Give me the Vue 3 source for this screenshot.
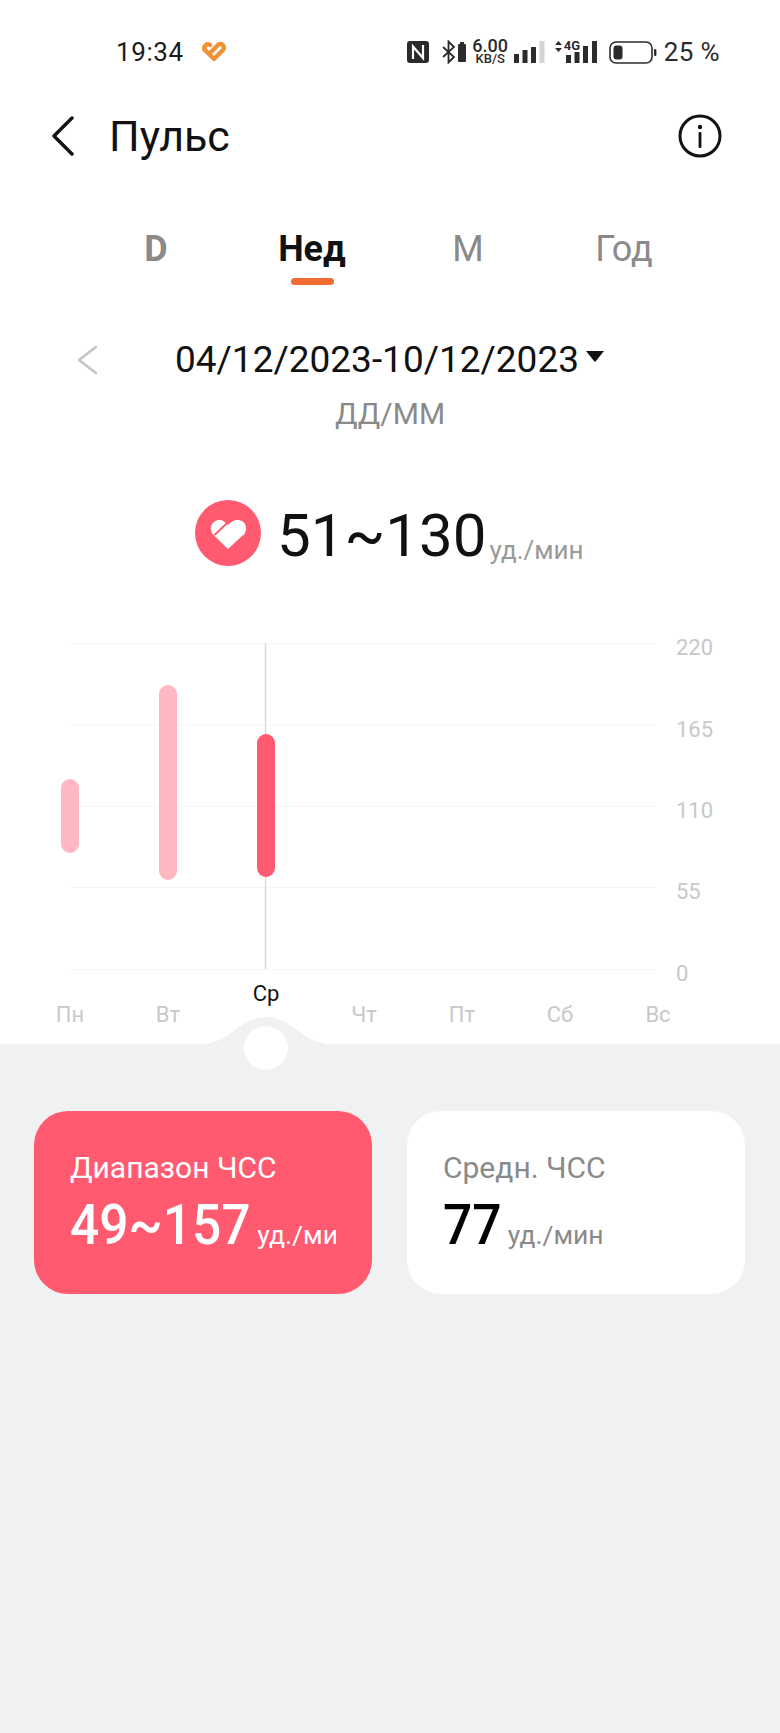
<script setup>
const tabs = [
  { label: "D", cls: "tab-bold" },
  { label: "Нед", cls: "tab-active" },
  { label: "М", cls: "" },
  { label: "Год", cls: "" },
];

// chart canvas: y = 0 is the top gridline
const gridLines = [0, 81.5, 163, 244, 326];
const yLabels = ["220", "165", "110", "55", "0"];

const bars = [
  { x: 61, y: 136, h: 74, color: "#ffb8c2" },
  { x: 159, y: 42, h: 195, color: "#ffb8c2" },
  { x: 257, y: 91, h: 143, color: "#ff5a70" },
];

const days = [
  { label: "Пн", x: 70 },
  { label: "Вт", x: 168 },
  { label: "Чт", x: 364 },
  { label: "Пт", x: 462 },
  { label: "Сб", x: 560 },
  { label: "Вс", x: 658 },
];
</script>

<template>
  <div class="page">
    <div class="top">
      <div class="status">
        <span class="time">19:34</span>
        <svg class="app-heart" width="26" height="22" viewBox="0 0 26 22">
          <path d="M3.5 8.5 L13 18 L22 9 C24.5 6 21 1.5 17.5 3.5 L10.5 10.5" fill="none" stroke="#f39233" stroke-width="4.4" stroke-linecap="round" stroke-linejoin="round" />
          <path d="M3.5 8.5 C2.5 5 6 2 9 4" fill="none" stroke="#f39233" stroke-width="4.4" stroke-linecap="round" />
        </svg>
        <div class="status-right">
          <svg width="22" height="22" viewBox="0 0 22 22">
            <rect width="22" height="22" rx="3" fill="#2b2b2b" />
            <path d="M6 18 V5.5 L16 17 V4" fill="none" stroke="#fff" stroke-width="2.2" />
          </svg>
          <svg class="bt" width="24" height="24" viewBox="0 0 24 24">
            <path d="M1 7 L12 17 L6.5 22.5 V1.5 L12 7 L1 17" fill="none" stroke="#2b2b2b" stroke-width="1.8" />
            <rect x="16" y="4" width="8" height="18" rx="1" fill="#2b2b2b" />
            <rect x="18" y="2" width="4" height="3" fill="#2b2b2b" />
          </svg>
          <div class="speed">
            <span class="speed-num">6.00</span>
            <span class="speed-unit">KB/S</span>
          </div>
          <svg class="sig1" width="31" height="23" viewBox="0 0 31 23">
            <rect x="0" y="13" width="5" height="9" fill="#2b2b2b" />
            <rect x="8.5" y="9" width="5" height="13" fill="#2b2b2b" />
            <rect x="17" y="6" width="5" height="16" fill="#2b2b2b" />
            <rect x="25.5" y="0" width="5" height="22" fill="#d4d4d4" />
          </svg>
          <div class="net">
            <svg class="net-arrows" width="7" height="11" viewBox="0 0 7 11">
              <path d="M3.5 0 L7 4 H0 Z M3.5 11 L0 7 H7 Z" fill="#2b2b2b" />
            </svg>
            <span class="net-label">4G</span>
            <svg class="net-bars" width="32" height="23" viewBox="0 0 32 23">
              <rect x="0" y="14" width="5" height="8" fill="#2b2b2b" />
              <rect x="8.5" y="11" width="5" height="11" fill="#2b2b2b" />
              <rect x="17" y="5" width="5" height="17" fill="#2b2b2b" />
              <rect x="26" y="0" width="5" height="22" fill="#2b2b2b" />
            </svg>
          </div>
          <svg class="battery" width="48" height="23" viewBox="0 0 48 23">
            <rect x="1" y="1" width="42" height="21" rx="6" fill="none" stroke="#2b2b2b" stroke-width="1.6" />
            <rect x="4.5" y="4.5" width="9" height="14" rx="3" fill="#2b2b2b" />
            <rect x="45" y="8" width="2.4" height="7" rx="1" fill="#2b2b2b" />
          </svg>
          <span class="level">25 %</span>
        </div>
      </div>

      <div class="header">
        <svg width="26" height="40" viewBox="0 0 26 40">
          <path d="M22 2 L4 20 L22 38" fill="none" stroke="#111" stroke-width="3.4" stroke-linecap="round" stroke-linejoin="round" />
        </svg>
        <h1 class="title">Пульс</h1>
        <svg class="info" width="44" height="44" viewBox="0 0 44 44">
          <circle cx="22" cy="22" r="20" fill="none" stroke="#111" stroke-width="3" />
          <circle cx="22" cy="13" r="2.2" fill="#111" />
          <rect x="20.6" y="18" width="2.8" height="16" rx="1" fill="#111" />
        </svg>
      </div>

      <div class="tabs">
        <div v-for="tab in tabs" :key="tab.label" class="tab" :class="tab.cls">
          {{ tab.label }}
          <span v-if="tab.cls === 'tab-active'" class="tab-line"></span>
        </div>
      </div>

      <div class="date-row">
        <svg class="date-prev" width="22" height="30" viewBox="0 0 22 30">
          <path d="M20 2 L3 15 L20 28" fill="none" stroke="#c4c4c4" stroke-width="2.6" stroke-linecap="round" stroke-linejoin="round" />
        </svg>
        <span class="date">04/12/2023-10/12/2023</span>
        <svg class="date-caret" width="20" height="12" viewBox="0 0 20 12">
          <path d="M1 1 H19 L11 11 Q10 12 9 11 Z" fill="#111" />
        </svg>
      </div>
      <div class="date-format">ДД/ММ</div>

      <div class="readout">
        <svg class="readout-icon" width="66" height="66" viewBox="0 0 66 66">
          <circle cx="33" cy="33" r="33" fill="#ff5a70" />
          <path d="M33 49 L18.5 35 C11.5 27 20 16 29 21.5 L33 25 C41 15 55 21 50 33 Q49 35 47.5 35.5 Z" fill="#fff" />
          <path d="M19.5 35 L36.5 19" stroke="#ff5a70" stroke-width="1.8" />
        </svg>
        <span class="range">51~130</span>
        <span class="range-unit">уд./мин</span>
      </div>

      <svg class="chart" width="780" height="410" viewBox="0 -14 780 410">
        <line v-for="y in gridLines" :key="y" x1="71" x2="656" :y1="y + 0.5" :y2="y + 0.5" class="grid" />
        <text v-for="(label, i) in yLabels" :key="label" x="676" :y="gridLines[i] + 12" class="axis-text">{{ label }}</text>
        <line x1="265.5" x2="265.5" y1="0" y2="326" class="cursor" />
        <rect
          v-for="bar in bars"
          :key="bar.x"
          :x="bar.x"
          :y="bar.y"
          width="18"
          :height="bar.h"
          rx="9"
          :fill="bar.color"
        />
        <text v-for="day in days" :key="day.label" :x="day.x" y="379" class="axis-text day">{{ day.label }}</text>
        <text x="266" y="358" class="day-active">Ср</text>
      </svg>
    </div>

    <svg class="bump" width="780" height="60" viewBox="0 0 780 60">
      <path d="M200 27 C232 27 238 0 266 0 C294 0 300 27 332 27 Z" fill="#f0f1f3" />
      <circle cx="266" cy="31" r="22" fill="#fff" />
    </svg>

    <div class="cards">
      <div class="card card-red">
        <div class="card-title">Диапазон ЧСС</div>
        <div class="card-value">
          <span class="card-num">49~157</span><span class="card-unit">уд./мин</span>
        </div>
      </div>
      <div class="card">
        <div class="card-title card-title-grey">Средн. ЧСС</div>
        <div class="card-value">
          <span class="card-num card-num-dark">77</span><span class="card-unit card-unit-grey">уд./мин</span>
        </div>
      </div>
    </div>
  </div>
</template>

<style>
html,
body {
  margin: 0;
  background: #f0f1f3;
}
</style>

<style scoped>
.page {
  width: 780px;
  height: 1733px;
  overflow: hidden;
  background: #f0f1f3;
  font-family: Roboto, "Noto Sans", sans-serif;
  color: #111;
}

.top {
  height: 1044px;
  background: #fff;
  overflow: hidden;
}

.status {
  display: flex;
  align-items: center;
  height: 24px;
  padding: 40px 60px 0 116px;
}

.time {
  font-size: 26px;
  letter-spacing: 0.6px;
  color: #1c1c1c;
}

.app-heart {
  margin-left: 17px;
}

.status-right {
  display: flex;
  align-items: center;
  margin-left: auto;
}

.bt {
  margin-left: 13px;
}

.speed {
  display: flex;
  flex-direction: column;
  align-items: center;
  margin-left: 6px;
  width: 37px;
  color: #2b2b2b;
  font-weight: 500;
}

.speed-num {
  font-size: 18px;
  line-height: 14px;
}

.speed-unit {
  font-size: 13px;
  line-height: 12px;
}

.sig1 {
  margin-left: 5px;
}

.net {
  position: relative;
  margin-left: 10px;
  width: 44px;
  height: 24px;
}

.net-arrows {
  position: absolute;
  left: 0;
  top: 1px;
}

.net-label {
  position: absolute;
  left: 9px;
  top: -1px;
  font-size: 13px;
  line-height: 13px;
  font-weight: 700;
  color: #2b2b2b;
}

.net-bars {
  position: absolute;
  left: 11px;
  top: 1px;
}

.battery {
  margin-left: 10px;
}

.level {
  margin-left: 7px;
  font-size: 26px;
  color: #2b2b2b;
  letter-spacing: 0.4px;
}

.header {
  display: flex;
  align-items: center;
  height: 60px;
  margin-top: 42px;
  padding: 0 58px 0 50px;
}

.title {
  margin: 0 0 0 33px;
  font-size: 43px;
  font-weight: 400;
  line-height: 60px;
}

.info {
  margin-left: auto;
}

.tabs {
  display: grid;
  grid-template-columns: repeat(4, 156px);
  margin: 53px 0 0 78px;
}

.tab {
  position: relative;
  text-align: center;
  font-size: 36px;
  line-height: 60px;
  color: #8a8a8a;
}

.tab-bold {
  font-weight: 700;
}

.tab-active {
  font-weight: 700;
  color: #111;
}

.tab-line {
  position: absolute;
  left: 57px;
  top: 59px;
  width: 43px;
  height: 7px;
  border-radius: 4px;
  background: #f26b30;
}

.date-row {
  position: relative;
  display: flex;
  align-items: center;
  height: 44px;
  margin-top: 59px;
  padding-left: 175px;
}

.date-prev {
  position: absolute;
  left: 76px;
  top: 7px;
}

.date {
  font-size: 37px;
  line-height: 44px;
}

.date-caret {
  margin-left: 6px;
  margin-top: -8px;
}

.date-format {
  margin-top: 14px;
  text-align: center;
  font-size: 30px;
  line-height: 36px;
  color: #8a8a8a;
}

.readout {
  display: flex;
  align-items: center;
  height: 70px;
  margin-top: 69px;
  padding-left: 195px;
}

.readout-icon {
  margin-top: -6px;
}

.range {
  margin-left: 16px;
  font-size: 60px;
  line-height: 70px;
}

.range-unit {
  align-self: flex-end;
  margin: 0 0 4px 3px;
  font-size: 26px;
  line-height: 34px;
  color: #999;
}

.chart {
  display: block;
  margin-top: 58px;
}

.grid {
  stroke: #f6f6f6;
  stroke-width: 1;
}

.cursor {
  stroke: #f3ccd3;
  stroke-width: 1.4;
}

.axis-text {
  font-size: 22px;
  fill: #c8c8c8;
}

.day {
  text-anchor: middle;
}

.day-active {
  font-size: 22px;
  fill: #111;
  text-anchor: middle;
}

.bump {
  display: block;
  position: relative;
  margin-top: -27px;
  margin-bottom: -33px;
}

.cards {
  position: relative;
  display: flex;
  gap: 35px;
  padding: 67px 34px 0;
}

.card {
  box-sizing: border-box;
  width: 338px;
  height: 183px;
  padding: 39px 36px 0;
  border-radius: 34px;
  background: #fff;
  overflow: hidden;
}

.card-red {
  background: #ff5a70;
  color: #fff;
}

.card-title {
  font-size: 30px;
  line-height: 36px;
}

.card-title-grey {
  color: #8a8a8a;
}

.card-value {
  display: flex;
  align-items: baseline;
  width: 266px;
  overflow: hidden;
  white-space: nowrap;
  margin-top: 9px;
}

.card-num {
  display: inline-block;
  font-size: 56px;
  line-height: 60px;
  font-weight: 500;
  transform: scaleX(0.92);
  transform-origin: left;
  margin-right: -15px;
}

.card-num-dark {
  color: #000;
  margin-right: -5px;
}

.card-unit {
  margin-left: 6px;
  font-size: 26.5px;
}

.card-unit-grey {
  color: #8a8a8a;
}
</style>
